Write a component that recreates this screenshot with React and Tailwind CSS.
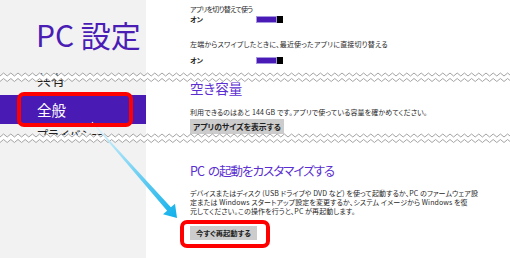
import React from 'react';

function Toggle() {
  return (
    <span className="flex h-[7px] w-[27px]">
      <span className="flex-1 bg-[#4a1ab6] border border-[#a596e0]" />
      <span className="w-[6px] bg-black" />
    </span>
  );
}

// torn-page cut mark drawn across the whole width
function Zigzag({ top }) {
  const step = 3.6;
  const n = Math.ceil(510 / step) + 2;
  const upper = Array.from({ length: n }, (_, i) => `${(i * step).toFixed(1)},${i % 2 ? 1 : 4}`);
  const lower = Array.from({ length: n }, (_, i) => `${(i * step).toFixed(1)},${i % 2 ? 6.5 : 9.5}`);
  return (
    <svg className={`absolute left-0 w-[510px] h-[11px] pointer-events-none ${top}`} viewBox="0 0 510 11">
      <polygon points={[...upper, ...lower.slice().reverse()].join(' ')} fill="#ffffff" />
      <polyline points={upper.join(' ')} fill="none" stroke="#a4a4a4" strokeWidth="1" />
      <polyline points={lower.join(' ')} fill="none" stroke="#a4a4a4" strokeWidth="1" />
    </svg>
  );
}

export default function App() {
  return (
    <div className="relative flex w-[510px] h-[258px] overflow-hidden bg-white text-[#1f1f1f] font-['Noto_Sans_CJK_JP','Noto_Sans',sans-serif] [font-feature-settings:'palt']">
      {/* Left nav */}
      <aside className="w-[146px] shrink-0 bg-[#f2f2f2] flex flex-col">
        <h1 className="mt-[19px] pl-[36px] text-[30px] leading-[30px] text-[#4a1db5] whitespace-nowrap">PC 設定</h1>
        <div className="mt-[22px] h-[16px] pl-[37px] text-[14px] leading-[16px]">共有</div>
        <div className="mt-[8px] h-[29px] bg-[#4a1ab5] text-white pl-[37px] flex items-center text-[14.5px]">全般</div>
        <div className="h-[11px] overflow-hidden pl-[37px] pt-[3px] text-[12px] leading-[16px]">プライバシー</div>
      </aside>

      {/* Settings content */}
      <main className="flex-1 pl-[44px] flex flex-col text-[7px] leading-[9px]">
        <p className="mt-[5px] tracking-[-0.7px]">アプリを切り替えて使う</p>
        <div className="mt-[1px] h-[9px] flex items-center">
          <span className="w-[66px] font-bold">オン</span>
          <Toggle />
        </div>
        <p className="mt-[16px] whitespace-nowrap tracking-[0.2px]">左端からスワイプしたときに、最近使ったアプリに直接切り替える</p>
        <div className="mt-[7px] h-[9px] flex items-center">
          <span className="w-[66px] font-bold">オン</span>
          <Toggle />
        </div>

        <h2 className="mt-[16px] text-[13.5px] leading-[14px] text-[#5a2ed0]">空き容量</h2>
        <p className="mt-[13px] whitespace-nowrap tracking-[0.1px]">利用できるのはあと 144 GB です。アプリで使っている容量を確かめてください。</p>
        <div className="mt-[2px] flex">
          <span className="h-[15px] flex items-center bg-[#cccccc] px-[3px] font-bold text-[7.8px]">アプリのサイズを表示する</span>
        </div>

        <h2 className="mt-[30px] text-[12.5px] leading-[14px] tracking-[-1px] text-[#5a2ed0] whitespace-nowrap">
          PC<span className="ml-[4px]">の起動をカスタマイズする</span>
        </h2>
        <p className="mt-[11px] whitespace-nowrap tracking-[0.1px]">
          デバイスまたはディスク (USB ドライブや DVD など) を使って起動するか、PC のファームウェア設
          <br />
          定または Windows スタートアップ設定を変更するか、システム イメージから Windows を復
          <br />
          元してください。この操作を行うと、PC が再起動します。
        </p>
        <div className="mt-[10px] flex">
          <span className="h-[14px] flex items-center bg-[#cccccc] px-[6px] font-bold text-[7.3px]">今すぐ再起動する</span>
        </div>
      </main>

      <Zigzag top="top-[72px]" />
      <Zigzag top="top-[133px]" />

      {/* annotation arrow */}
      <svg className="absolute inset-0 w-[510px] h-[258px] pointer-events-none" viewBox="0 0 510 258">
        <defs>
          <linearGradient id="arrowGrad" gradientUnits="userSpaceOnUse" x1="92" y1="122" x2="177" y2="218">
            <stop offset="0" stopColor="#e4f6fd" />
            <stop offset="1" stopColor="#0fb0ea" />
          </linearGradient>
        </defs>
        <polygon
          points="92.4,121.7 170.9,207.3 175,203.7 177,218 163,214.3 167.1,210.7 91.6,122.3"
          fill="url(#arrowGrad)"
        />
      </svg>

      {/* annotation boxes */}
      <div className="absolute left-[17px] top-[92px] w-[116px] h-[35px] border-4 border-[#ff0000] rounded-[7px] pointer-events-none" />
      <div className="absolute left-[180px] top-[220px] w-[90px] h-[28px] border-4 border-[#ff0000] rounded-[7px] pointer-events-none" />
    </div>
  );
}
